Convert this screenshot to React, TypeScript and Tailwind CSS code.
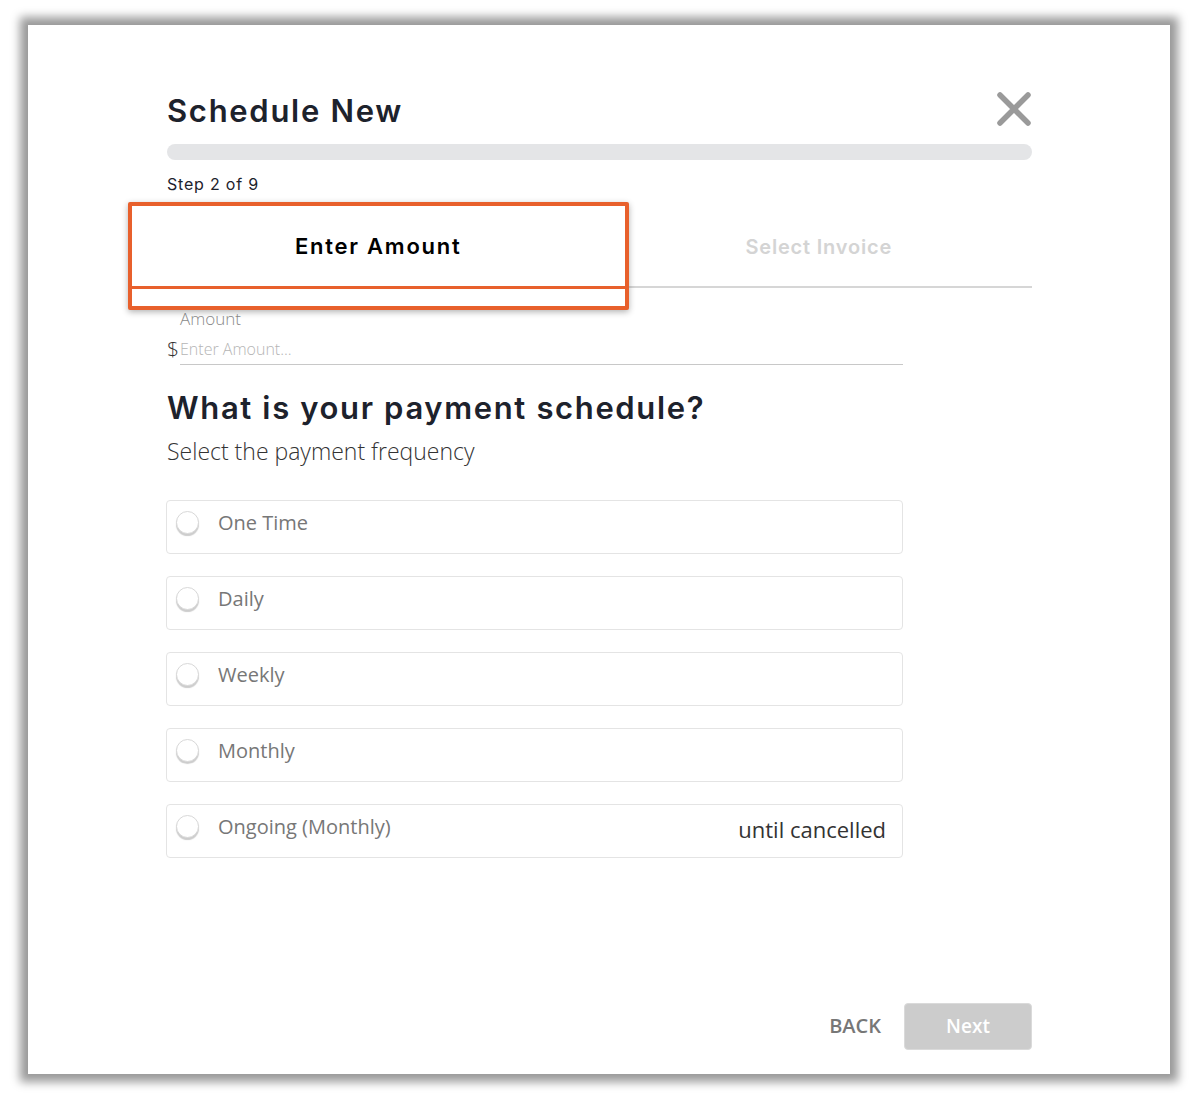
import React from "react";

const head = { fontFamily: "Inter, 'DejaVu Sans', sans-serif" };
const body = { fontFamily: "'Open Sans', 'Liberation Sans', sans-serif" };

const options = [
  { label: "One Time" },
  { label: "Daily" },
  { label: "Weekly" },
  { label: "Monthly" },
  { label: "Ongoing (Monthly)", right: "until cancelled" },
];

export default function App() {
  return (
    <div className="min-h-[1102px] w-[1198px] bg-white pl-[28px] pt-[25px]">
      <div className="flex h-[1049px] w-[1142px] flex-col bg-white pb-[24px] pl-[139px] pr-[138px] pt-[66px] shadow-[0_0_9px_8px_rgba(0,0,0,0.4)]">
        {/* title row */}
        <div className="flex h-[40px] items-center justify-between">
          <h1 style={head} className="text-[31px] font-semibold leading-[40px] tracking-[0.055em] text-[#1d222c]">
            Schedule New
          </h1>
          <svg width="36" height="36" viewBox="0 0 36 36" className="mt-[-4px]">
            <path d="M4 4 L32 32 M32 4 L4 32" stroke="#9a9a9a" strokeWidth="5.5" strokeLinecap="round" />
          </svg>
        </div>

        {/* progress */}
        <div className="mt-[13px] h-[16px] w-full rounded-full bg-[#e4e5e7]" />

        <div style={head} className="mt-[14px] text-[16px] leading-[20px] tracking-[0.05em] text-[#1d222c]">
          Step 2 of 9
        </div>

        {/* tabs */}
        <div className="mt-[12px] grid grid-cols-2">
          <div className="relative h-[82px]">
            <div className="absolute left-[-39px] right-[-29px] top-[-4px] h-[108px] rounded-[2px] border-[4px] border-[#e8602c] bg-white shadow-[0_2px_6px_rgba(0,0,0,0.3)]">
              <div className="flex h-[80px] items-center justify-center">
                <span style={head} className="text-[22px] font-semibold tracking-[0.08em] text-black">
                  Enter Amount
                </span>
              </div>
              <div className="h-[3px] w-full bg-[#e8602c]" />
            </div>
          </div>
          <div className="flex h-[82px] items-center justify-center border-b-2 border-[#d6d6d6] pt-[2px]">
            <span style={head} className="ml-[6px] text-[20px] font-semibold tracking-[0.04em] text-[#d4d4d4]">
              Select Invoice
            </span>
          </div>
        </div>

        {/* amount */}
        <div style={body} className="mt-[22px] pl-[13px] text-[17px] font-light leading-[18px] text-[#8a8a8a]">
          Amount
        </div>
        <div className="mt-[9px] flex h-[28px] items-end">
          <span style={body} className="w-[13px] pb-[3px] text-[21px] font-light leading-[26px] text-[#333]">
            $
          </span>
          <div
            style={body}
            className="flex h-[28px] w-[723px] items-center border-b border-[#c8c8c8] pb-[4px] text-[16px] font-light text-[#b5b5b5]"
          >
            Enter Amount...
          </div>
        </div>

        {/* question */}
        <h2 style={head} className="mt-[25px] text-[31px] font-semibold leading-[36px] tracking-[0.053em] text-[#1d222c]">
          What is your payment schedule?
        </h2>
        <p style={body} className="mt-[10px] text-[23px] font-light leading-[30px] text-[#333]">
          Select the payment frequency
        </p>

        <div className="ml-[-1px] mt-[34px] flex w-[737px] flex-col gap-[22px]">
          {options.map((o) => (
            <div
              key={o.label}
              className="flex h-[54px] items-start rounded-[4px] border border-[#e4e4e4] pl-[9px] pr-[16px] pt-[9px]"
            >
              <div className="mt-[1px] h-[23px] w-[23px] shrink-0 rounded-full border border-[#d8d8d8] bg-white shadow-[0_2px_1px_rgba(0,0,0,0.2)]" />
              <span style={body} className="ml-[19px] text-[20px] leading-[26px] text-[#777]">
                {o.label}
              </span>
              {o.right && (
                <span style={body} className="ml-auto mt-[1px] text-[22px] leading-[28px] text-[#333]">
                  {o.right}
                </span>
              )}
            </div>
          ))}
        </div>

        {/* footer */}
        <div className="mt-auto flex items-center justify-end">
          <span style={body} className="mr-[23px] mt-[-2px] text-[20px] font-semibold text-[#777]">
            BACK
          </span>
          <div
            style={body}
            className="flex h-[47px] w-[128px] items-center justify-center rounded-[4px] border border-[#dadada] bg-[#cccccc] text-[19px] font-semibold text-white"
          >
            Next
          </div>
        </div>
      </div>
    </div>
  );
}
